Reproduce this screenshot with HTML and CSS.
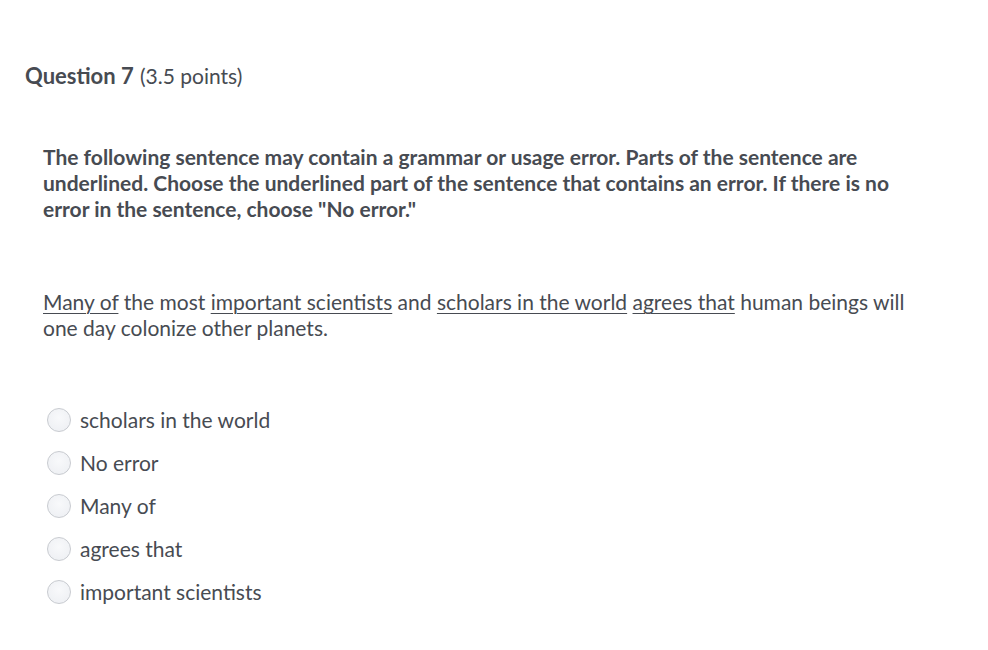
FILE: index.html
```html
<!DOCTYPE html>
<html>
<head>
<meta charset="utf-8">
<link rel="stylesheet" href="styles.css">
</head>
<body>
<div class="page">
  <h2 class="qtitle"><span class="qnum">Question 7</span> <span class="pts">(3.5 points)</span></h2>
  <div class="qbody">
    <p class="instr">The following sentence may contain a grammar or usage error. Parts of the sentence are underlined. Choose the underlined part of the sentence that contains an error. If there is no error in the sentence, choose "No error."</p>
    <p class="sentence"><u>Many of</u> the most <u>important scientists</u> and <u>scholars in the world</u> <u>agrees that</u> human beings will one day colonize other planets.</p>
    <ul class="options">
      <li class="opt"><span class="radio"></span><span class="label">scholars in the world</span></li>
      <li class="opt"><span class="radio"></span><span class="label">No error</span></li>
      <li class="opt"><span class="radio"></span><span class="label">Many of</span></li>
      <li class="opt"><span class="radio"></span><span class="label">agrees that</span></li>
      <li class="opt"><span class="radio"></span><span class="label">important scientists</span></li>
    </ul>
  </div>
</div>
</body>
</html>
```
FILE: styles.css
```css
html, body {
  margin: 0;
  padding: 0;
  background: #ffffff;
}
body {
  font-family: Lato, "Open Sans", sans-serif;
  color: #474b52;
}
.page {
  padding: 62px 0 0 25px;
}
.qtitle {
  margin: 0;
  line-height: 26px;
  font-weight: normal;
}
.qnum {
  font-size: 22px;
  font-weight: 700;
}
.pts {
  font-size: 21px;
  font-weight: 400;
}
.qbody {
  padding: 0 0 0 18px;
  width: 866px;
}
.instr {
  margin: 55px 0 0 0;
  font-size: 21px;
  line-height: 26px;
  font-weight: 700;
}
.sentence {
  margin: 67px 0 0 0;
  font-size: 21px;
  line-height: 26px;
}
.sentence u {
  text-decoration-thickness: 1px;
  text-underline-offset: 3px;
}
.options {
  list-style: none;
  margin: 67px 0 0 0;
  padding: 0;
  display: flex;
  flex-direction: column;
  gap: 19px;
}
.opt {
  display: flex;
  align-items: center;
  gap: 9px;
  height: 24px;
  margin-left: 4px;
}
.radio {
  width: 22px;
  height: 22px;
  border-radius: 50%;
  border: 1px solid #c8cbd0;
  background: radial-gradient(circle at 50% 40%, #f8f9fb 0%, #eceef2 100%);
  flex: none;
}
.label {
  font-size: 21px;
  line-height: 24px;
}
```
